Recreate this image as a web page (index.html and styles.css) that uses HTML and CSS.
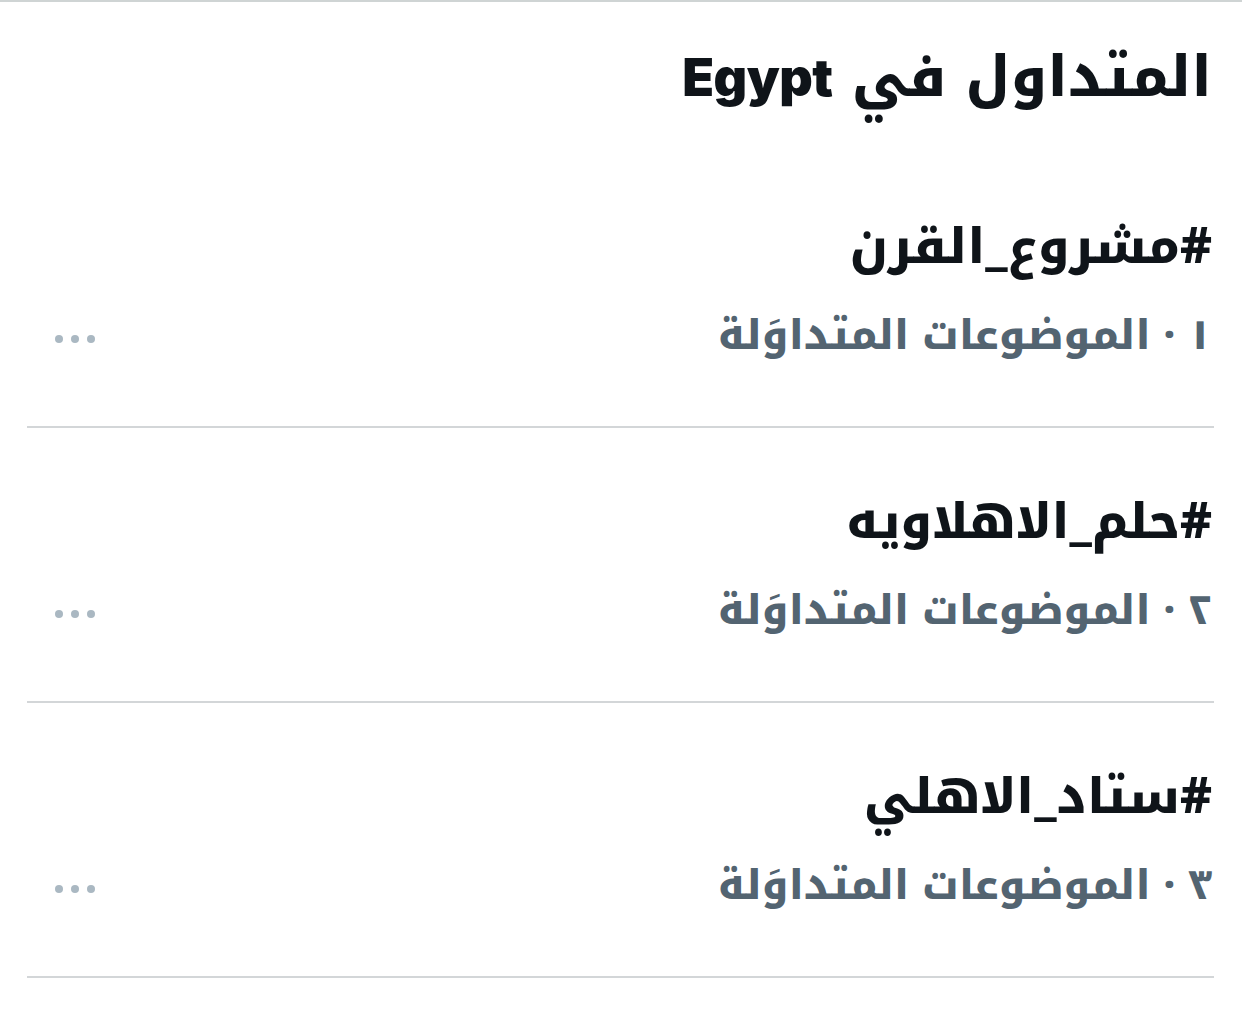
FILE: index.html
```html
<!DOCTYPE html>
<html lang="ar" dir="rtl">
<head>
<meta charset="utf-8">
<link rel="stylesheet" href="styles.css">
</head>
<body>
<div class="topline"></div>
<main class="panel">
  <h1 class="title">المتداول في <span class="latin">Egypt</span></h1>
  <ul class="trends">
    <li class="trend">
      <div class="trend-text">
        <div class="trend-name">#مشروع_القرن</div>
        <div class="trend-meta">١ · الموضوعات المتداوَلة</div>
      </div>
      <button class="more" aria-label="المزيد"><span></span><span></span><span></span></button>
    </li>
    <li class="trend">
      <div class="trend-text">
        <div class="trend-name">#حلم_الاهلاويه</div>
        <div class="trend-meta">٢ · الموضوعات المتداوَلة</div>
      </div>
      <button class="more" aria-label="المزيد"><span></span><span></span><span></span></button>
    </li>
    <li class="trend">
      <div class="trend-text">
        <div class="trend-name">#ستاد_الاهلي</div>
        <div class="trend-meta">٣ · الموضوعات المتداوَلة</div>
      </div>
      <button class="more" aria-label="المزيد"><span></span><span></span><span></span></button>
    </li>
  </ul>
</main>
</body>
</html>
```
FILE: styles.css
```css
* { box-sizing: border-box; }
html, body { margin: 0; padding: 0; background: #ffffff; }
body {
  font-family: "Noto Kufi Arabic", "Noto Sans Arabic UI", "Noto Sans Arabic", "Noto Naskh Arabic", "DejaVu Sans", sans-serif;
  color: #0f1419;
  width: 1242px;
  height: 1018px;
  overflow: hidden;
}
.topline { height: 2px; background: #cfd4d4; }
.panel { padding: 0 28px 0 27px; }
.title {
  margin: 0;
  padding: 32px 2px 0 0;
  height: 151px;
  font-size: 56px;
  font-weight: 800;
  line-height: 86px;
}
.latin { font-family: "Inter", "Noto Sans", sans-serif; font-weight: 900; font-size: 52px; letter-spacing: -0.5px; }
.trends { list-style: none; margin: 0; padding: 0; }
.trend {
  height: 275px;
  border-bottom: 2px solid #d3d6d8;
  display: flex;
  align-items: flex-start;
  justify-content: space-between;
  padding: 58px 2px 0 0;
}
.trend-name {
  font-size: 49px;
  font-weight: 800;
  line-height: 72px;
  color: #0f1419;
}
.trend-meta {
  margin-top: 22px;
  font-size: 41px;
  font-weight: 800;
  line-height: 60px;
  color: #536471;
  word-spacing: -1px;
}
.more {
  border: 0;
  background: none;
  padding: 0;
  margin: 124px 0 0 28px;
  display: flex;
  gap: 8px;
  cursor: pointer;
}
.more span {
  width: 8px;
  height: 8px;
  border-radius: 50%;
  background: #aab8c2;
}
```
